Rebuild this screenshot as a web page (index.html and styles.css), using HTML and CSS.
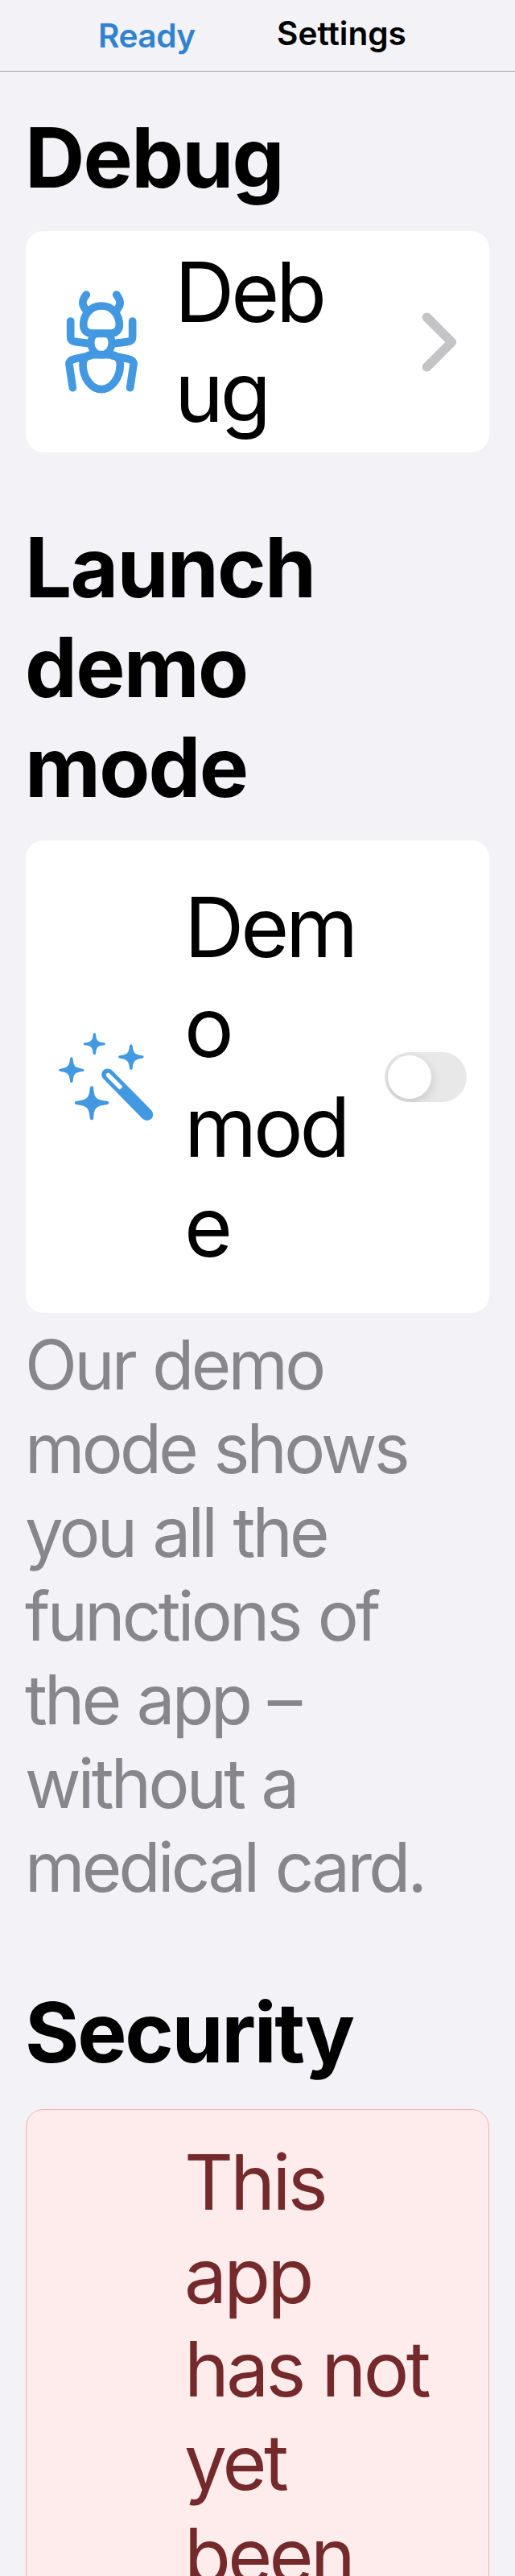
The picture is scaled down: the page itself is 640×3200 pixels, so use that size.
FILE: index.html
```html
<!DOCTYPE html>
<html lang="en">
<head>
<meta charset="utf-8">
<title>Settings</title>
<link rel="stylesheet" href="styles.css">
</head>
<body>
<header class="bar">
  <a class="bar-back">Ready</a>
  <span class="bar-title">Settings</span>
</header>
<main class="content">
  <h2 class="heading heading-debug">Debug</h2>
  <section class="card card-debug">
    <svg class="icon-ant" viewBox="60 60 276 390" fill="none" stroke="#4299e1" stroke-width="29" stroke-linecap="round" stroke-linejoin="round">
      <path d="M142 78C127 98 123 112 138 132M254 78C269 98 273 112 258 132"/>
      <path d="M198 120C158 120 131 152 131 190C131 212 145 222 162 222H234C251 222 265 212 265 190C265 152 238 120 198 120Z"/>
      <path d="M183 224H213C230 224 237 240 237 258C237 282 220 303 198 303C176 303 159 282 159 258C159 240 166 224 183 224Z" stroke-width="27"/>
      <path d="M83 177V235Q83 252 102 254L152 260M314 177V235Q314 252 295 254L245 260"/>
      <path d="M158 305L100 317Q77 322 78 337L91 425M238 305L296 317Q319 322 318 337L305 425"/>
      <path d="M166 302H230C254 302 268 316 268 339C268 388 236 431 198 431C160 431 129 388 129 339C129 316 142 302 166 302Z"/>
    </svg>
    <div class="label"><div>Deb</div><div>ug</div></div>
    <svg class="chevron" viewBox="0 0 44 76" fill="none" stroke="#c4c4c6" stroke-width="11.6" stroke-linecap="round" stroke-linejoin="round"><path d="M6.5 7.2L37.3 38L6.5 68.8"/></svg>
  </section>

  <h2 class="heading heading-demo">Launch<br>demo<br>mode</h2>
  <section class="card card-demo">
    <svg class="icon-wand" viewBox="36 38 357 333" fill="#4299e1">
      <path d="M172 41Q176 41 177 46C179 68 182 74 208 78Q213 79 213 82Q213 86 208 87C182 90 180 96 177 118Q176 123 172 123Q168 123 167 118C164 96 162 90 136 87Q131 86 131 82Q131 79 136 78C162 74 165 68 167 46Q168 41 172 41Z"/>
      <path d="M308 84Q313 84 314 90C317 116 321 122 350 126Q356 127 356 131Q356 135 350 136C321 140 317 147 314 173Q313 179 308 179Q304 179 303 173C300 147 296 140 267 136Q261 135 261 131Q261 127 267 126C296 122 300 116 303 90Q304 84 308 84Z"/>
      <path d="M86 132Q91 132 92 138C94 164 98 171 128 175Q134 176 134 180Q134 184 128 185C98 189 94 195 92 221Q91 227 86 227Q82 227 81 221C78 195 74 189 45 185Q39 184 39 180Q39 176 45 175C74 171 78 164 81 138Q82 132 86 132Z"/>
      <path d="M162 239Q168 239 169 247C171 284 178 290 218 295Q226 296 226 302Q226 308 218 309C178 314 171 321 169 358Q168 366 162 366Q156 366 155 358C152 321 145 314 106 309Q98 308 98 302Q98 296 106 295C145 290 152 284 155 247Q156 239 162 239Z"/>
      <path fill-rule="evenodd" d="M205 181C214 171 229 173 238 181L383 328C395 341 391 357 382 363C372 371 358 368 350 360L205 212C197 203 196 190 205 181ZM217 193C214 197 215 202 219 206L264 251Q267 253 269 250L275 244Q277 241 275 239L230 194C226 190 220 189 217 193Z"/>
    </svg>
    <div class="label label-demo"><div>Dem</div><div>o</div><div>mod</div><div>e</div></div>
    <span class="toggle"><span class="knob"></span></span>
  </section>
  <p class="note">Our demo<br>mode shows<br>you all the<br>functions of<br>the app –<br>without a<br>medical card.</p>

  <h2 class="heading heading-security">Security</h2>
  <section class="alert">
    <p class="alert-text">This<br>app<br>has not<br>yet<br>been</p>
  </section>
</main>
</body>
</html>
```

FILE: styles.css
```css
* { box-sizing: border-box; }
html, body { margin: 0; padding: 0; }
body {
  width: 640px;
  height: 3200px;
  overflow: hidden;
  background: #f2f2f7;
  color: #000;
  font-family: Inter, "Liberation Sans", sans-serif;
}
.bar {
  height: 89px;
  border-bottom: 1px solid #a8a8ac;
  display: flex;
  align-items: flex-start;
  padding-left: 122px;
  font-size: 40.6px;
  line-height: 50px;
  font-weight: 600;
  white-space: nowrap;
}
.bar-back { color: #3182ce; width: 222px; padding-top: 20px; letter-spacing: -0.5px; }
.bar-title { padding-top: 17px; letter-spacing: 0; }
.content { padding: 0 32px; }
.heading {
  margin: 0 0 0 -1px;
  font-size: 103px;
  line-height: 124px;
  font-weight: 700;
  letter-spacing: -1.8px;
  white-space: nowrap;
}
.heading-debug { padding-top: 44.5px; }
.heading-demo { padding-top: 80.5px; }
.heading-security { padding-top: 90.5px; letter-spacing: -2.3px; }
.card {
  background: #fff;
  border-radius: 22px;
  display: flex;
  align-items: center;
}
.card-debug { margin-top: 29.5px; height: 275px; padding: 0 40px 0 48px; }
.card-demo { margin-top: 29.5px; height: 587px; padding: 0 28px 0 40px; }
.icon-ant { width: 92px; height: 130px; flex: none; }
.icon-wand { width: 119px; height: 111px; flex: none; }
.label {
  flex: 1;
  margin-left: 45px;
  font-size: 103px;
  line-height: 124px;
  letter-spacing: -4.2px;
  white-space: nowrap;
}
.label-demo { margin-left: 38px; }
.chevron { width: 44px; height: 76px; flex: none; }
.toggle {
  width: 102px;
  height: 62px;
  border-radius: 31px;
  background: #e8e8e8;
  padding: 4px;
  flex: none;
  overflow: hidden;
}
.knob {
  display: block;
  width: 54px;
  height: 54px;
  border-radius: 50%;
  background: #fff;
  box-shadow: 0 5px 14px rgba(0, 0, 0, .15);
}
.note {
  margin: 13px 0 0 -1px;
  font-size: 85px;
  line-height: 104px;
  letter-spacing: -3.7px;
  word-spacing: 2px;
  color: #87868b;
  white-space: nowrap;
}
.alert {
  margin-top: 33.5px;
  height: 700px;
  border: 1px solid #fbaeae;
  border-radius: 22px;
  background: #feebeb;
  padding: 31.5px 0 0 196px;
}
.alert-text {
  margin: 0;
  font-size: 94.5px;
  line-height: 116px;
  letter-spacing: -3.7px;
  color: #742a2a;
  white-space: nowrap;
}
```
